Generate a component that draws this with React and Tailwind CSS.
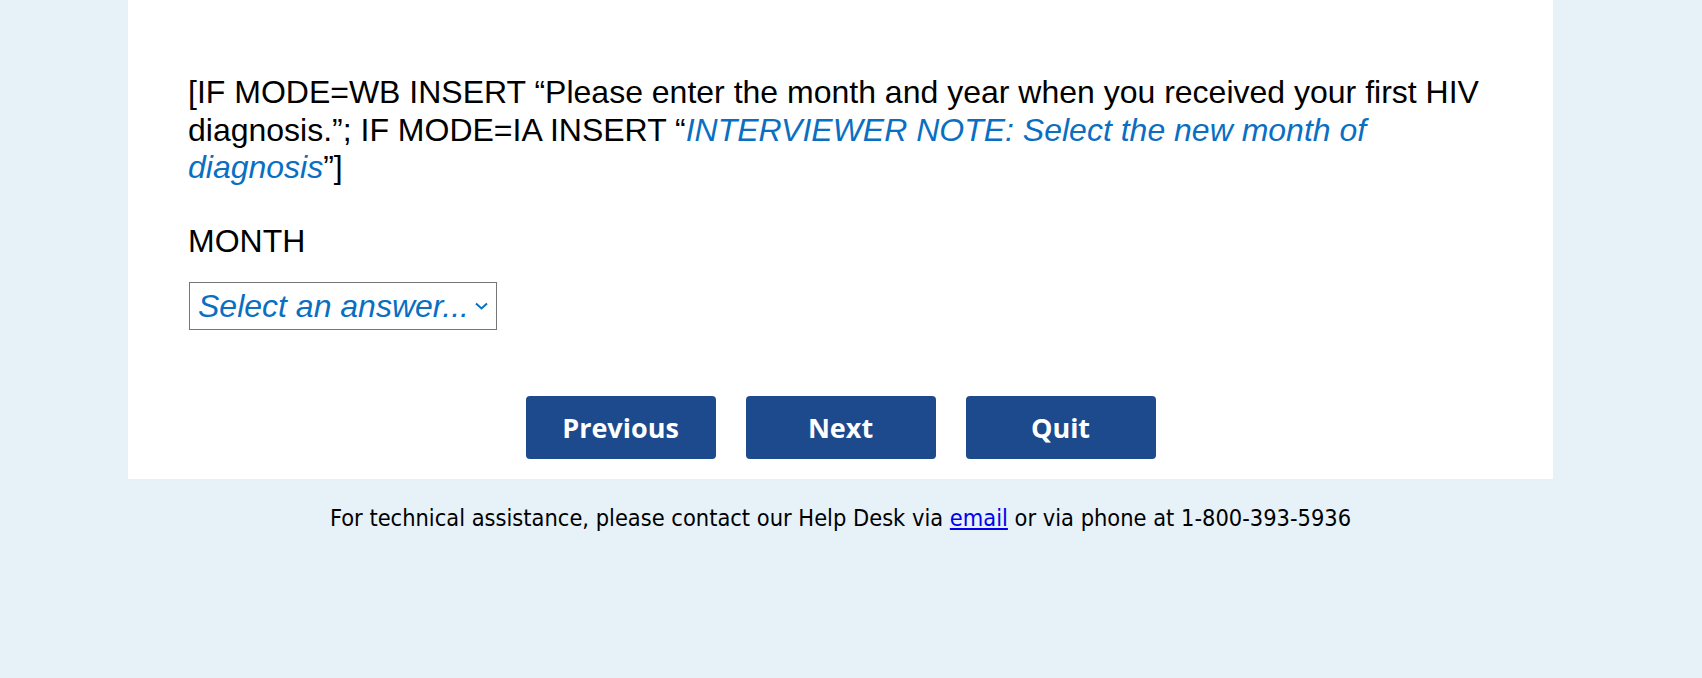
export default function App() {
  return (
    <div className="min-h-[678px] w-full bg-[#e6f1f8]">
      {/* Survey panel */}
      <div className="ml-[128px] w-[1425px] bg-white pt-[74px] pb-[20px] pl-[60px] pr-[60px]">
        <p className="text-[32px] leading-[37.5px] text-black" style={{ fontFamily: '"Liberation Sans", Arial, sans-serif' }}>
          [IF MODE=WB INSERT “Please enter the month and year when you received your first HIV diagnosis.”; IF MODE=IA INSERT “
          <em className="text-[#0a6fc2]">INTERVIEWER NOTE: Select the new month of diagnosis</em>”]
        </p>

        <p className="mt-[36px] text-[32px] leading-[37.5px] text-black" style={{ fontFamily: '"Liberation Sans", Arial, sans-serif' }}>
          MONTH
        </p>

        <div className="mt-[22px] ml-[1px] flex h-[48px] w-[308px] items-center justify-between border border-[#767676] pl-[8px] pr-[7px]">
          <span className="text-[32px] italic leading-none text-[#0a6fc2]" style={{ fontFamily: '"Liberation Sans", Arial, sans-serif' }}>
            Select an answer...
          </span>
          <svg className="h-[8px] w-[15px]" viewBox="0 0 15 8" fill="none" stroke="#0a6fc2" strokeWidth="2">
            <path d="M2 1.5l5.5 5 5.5-5" />
          </svg>
        </div>

        <div className="mt-[66px] -ml-[60px] -mr-[60px] flex justify-center gap-[30px]">
          {['Previous', 'Next', 'Quit'].map(label => (
            <button
              key={label}
              className="flex h-[63px] w-[190px] items-center justify-center rounded-[4px] bg-[#1d4a8c] pt-[2px] text-[27px] font-bold text-white"
              style={{ fontFamily: '"Open Sans", sans-serif' }}>
              {label}
            </button>
          ))}
        </div>
      </div>

      {/* Footer */}
      <p className="mt-[24px] ml-[128px] w-[1425px] text-center text-[23.4px] leading-[30px] text-black" style={{ fontFamily: '"DejaVu Sans Condensed", "DejaVu Sans", sans-serif' }}>
        For technical assistance, please contact our Help Desk via <a href="#" className="text-[#0000ee] underline">email</a> or via phone at 1-800-393-5936
      </p>
    </div>
  )
}
